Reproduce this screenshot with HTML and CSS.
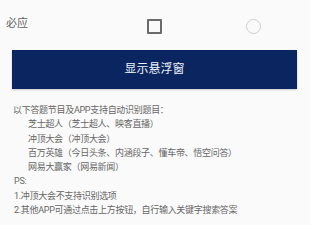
FILE: index.html
```html
<!DOCTYPE html>
<html lang="en">
<head>
    <meta charset="UTF-8">
    <title>悬浮窗设置</title>
    <link rel="stylesheet" href="styles.css">
</head>
<body>
<div class="warper">
    <div class="option-row">
        <span class="label">必应</span>
        <span class="check"></span>
        <span class="radio"></span>
    </div>
    <div class="show-btn">显示悬浮窗</div>
    <div class="tips">
        <div class="line">以下答题节目及APP支持自动识别题目：</div>
        <div class="line sub">芝士超人（芝士超人、映客直播）</div>
        <div class="line sub">冲顶大会（冲顶大会）</div>
        <div class="line sub">百万英雄（今日头条、内涵段子、懂车帝、悟空问答）</div>
        <div class="line sub">网易大赢家（网易新闻）</div>
        <div class="line ps">PS:</div>
        <div class="line ps">1.冲顶大会不支持识别选项</div>
        <div class="line ps">2.其他APP可通过点击上方按钮，自行输入关键字搜索答案</div>
    </div>
</div>
</body>
</html>
```

FILE: styles.css
```css
html, body {
    margin: 0;
    background: #fafafa;
}

.warper {
    width: 310px;
    height: 225px;
    font-family: Roboto, "Noto Sans CJK SC", sans-serif;
    color: #666666;
}

.option-row {
    display: flex;
    align-items: center;
    padding: 7px 0 0 6px;
    box-sizing: border-box;
    height: 45px;
}

.label {
    width: 141px;
    font-size: 11px;
    margin-bottom: 8px;
    color: #5f5f5f;
}

.check {
    width: 11px;
    height: 11px;
    border: 2px solid #6a6a6a;
    border-radius: 1px;
}

.radio {
    width: 13px;
    height: 13px;
    margin-left: 84px;
    border: 1px solid #cfcfcf;
    border-radius: 50%;
}

.show-btn {
    margin: 5px 13px 0 12px;
    height: 39px;
    line-height: 39px;
    background: #0b2560;
    color: #eef1f7;
    font-size: 12px;
    text-align: center;
    box-shadow: 0 1px 2px rgba(0, 0, 0, 0.2);
}

.tips {
    margin-top: 14px;
    padding-left: 13px;
    font-size: 9px;
    line-height: 14.3px;
    letter-spacing: -0.3px;
}

.sub {
    padding-left: 15px;
}

.ps {
    padding-left: 1px;
}
```
